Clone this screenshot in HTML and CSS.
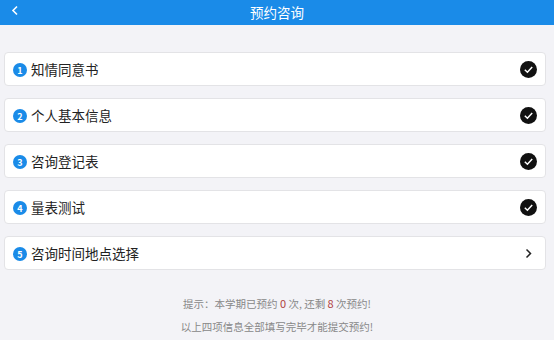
FILE: index.html
```html
<!DOCTYPE html>
<html lang="zh-CN">
<head>
  <meta charset="UTF-8">
  <meta name="viewport" content="width=device-width, initial-scale=1.0">
  <title>预约咨询</title>
  <link rel="stylesheet" href="styles.css">
</head>
<body>
  <header class="topbar">
    <span class="back">
      <svg width="8" height="11" viewBox="0 0 8 11"><path d="M6 1.5 L2 5.5 L6 9.5" fill="none" stroke="#fff" stroke-width="1.6"/></svg>
    </span>
    <h1>预约咨询</h1>
  </header>

  <div class="steps">
    <div class="step">
      <span class="num">1</span><span class="label">知情同意书</span>
      <span class="done"><svg width="17" height="17" viewBox="0 0 17 17"><circle cx="8.5" cy="8.5" r="8.5" fill="#111"/><path d="M4.8 8.8 L7.4 11.2 L12.2 5.9" fill="none" stroke="#fff" stroke-width="1.5"/></svg></span>
    </div>
    <div class="step">
      <span class="num">2</span><span class="label">个人基本信息</span>
      <span class="done"><svg width="17" height="17" viewBox="0 0 17 17"><circle cx="8.5" cy="8.5" r="8.5" fill="#111"/><path d="M4.8 8.8 L7.4 11.2 L12.2 5.9" fill="none" stroke="#fff" stroke-width="1.5"/></svg></span>
    </div>
    <div class="step">
      <span class="num">3</span><span class="label">咨询登记表</span>
      <span class="done"><svg width="17" height="17" viewBox="0 0 17 17"><circle cx="8.5" cy="8.5" r="8.5" fill="#111"/><path d="M4.8 8.8 L7.4 11.2 L12.2 5.9" fill="none" stroke="#fff" stroke-width="1.5"/></svg></span>
    </div>
    <div class="step">
      <span class="num">4</span><span class="label">量表测试</span>
      <span class="done"><svg width="17" height="17" viewBox="0 0 17 17"><circle cx="8.5" cy="8.5" r="8.5" fill="#111"/><path d="M4.8 8.8 L7.4 11.2 L12.2 5.9" fill="none" stroke="#fff" stroke-width="1.5"/></svg></span>
    </div>
    <div class="step">
      <span class="num">5</span><span class="label">咨询时间地点选择</span>
      <span class="done"><svg width="17" height="17" viewBox="0 0 17 17"><path d="M6.5 4.5 L10.5 8.5 L6.5 12.5" fill="none" stroke="#222" stroke-width="1.5"/></svg></span>
    </div>
  </div>

  <div class="tips">
    <p>提示：本学期已预约 <em>0</em> 次, 还剩 <em>8</em> 次预约!</p>
    <p>以上四项信息全部填写完毕才能提交预约!</p>
  </div>
</body>
</html>
```

FILE: styles.css
```css
body {
  font-family: "Noto Sans CJK SC", "Liberation Sans", sans-serif;
  margin: 0;
  padding: 0;
  background-color: #f3f3f7;
  min-height: 100vh;
}
.topbar {
  background-color: #1a8be8;
  color: white;
  height: 25px;
  display: flex;
  align-items: center;
  justify-content: center;
  position: relative;
}
.topbar h1 {
  margin: 0;
  font-size: 13.5px;
  font-weight: normal;
  line-height: 25px;
}
.back {
  position: absolute;
  left: 11px;
  top: 5px;
  display: flex;
}
.steps {
  margin: 27px 8px 0 4px;
  display: flex;
  flex-direction: column;
  gap: 12px;
}
.step {
  background-color: #fff;
  border: 1px solid #e3e3e6;
  border-radius: 4px;
  height: 32px;
  display: flex;
  align-items: center;
  padding: 0 8px 0 8px;
}
.num {
  width: 14px;
  height: 14px;
  border-radius: 50%;
  background-color: #1a8be8;
  color: #fff;
  font-size: 9px;
  font-weight: bold;
  display: flex;
  align-items: center;
  justify-content: center;
  margin-right: 4px;
  margin-top: 2px;
}
.label {
  font-size: 13.5px;
  color: #222;
  flex: 1;
}
.done {
  display: flex;
}
.tips {
  margin-top: 26px;
  text-align: center;
  font-size: 10.5px;
  color: #888;
}
.tips p {
  margin: 0 0 8px 0;
  line-height: 15px;
}
.tips em {
  font-style: normal;
  color: #b0403e;
  font-size: 11px;
}
```
